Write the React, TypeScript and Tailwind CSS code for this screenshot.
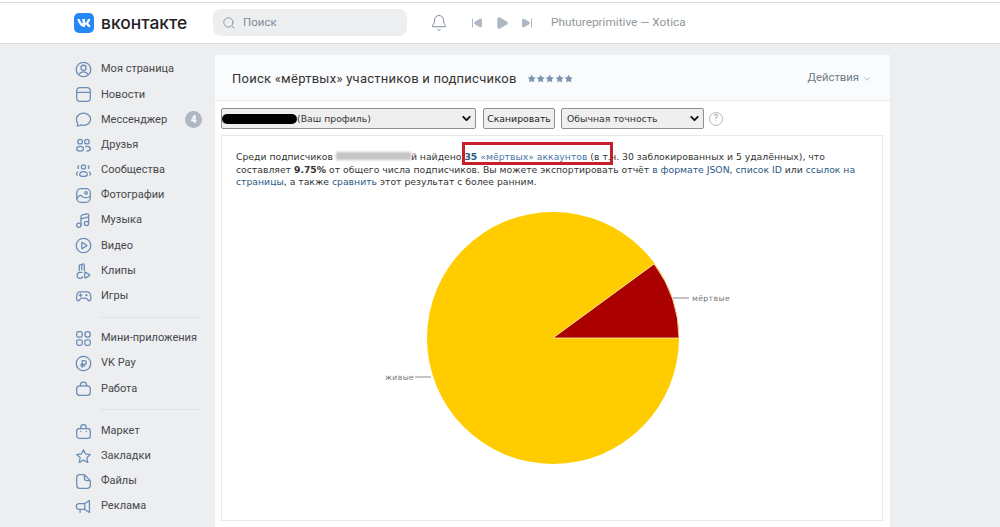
import React from 'react';
import { ChevronDown, Search, Bell, SkipBack, SkipForward, Play, Star } from 'lucide-react';
import { FaVk } from 'react-icons/fa';

const Ico = ({ children }: { children: React.ReactNode }) => (
  <svg viewBox="0 0 20 20" fill="none" stroke="#6a8db5" strokeWidth={1.5} strokeLinecap="round" strokeLinejoin="round" className="w-[17px] h-[17px] shrink-0">
    {children}
  </svg>
);

const icons: Record<string, React.ReactNode> = {
  user: <><circle cx="10" cy="10" r="8.5" /><circle cx="10" cy="8" r="3" /><path d="M5 15.5c1-2 3-2.8 5-2.8s4 .8 5 2.8" /></>,
  news: <><rect x="2" y="2" width="16" height="16" rx="4" /><path d="M2 7.5h16" /></>,
  chat: <path d="M10 2.5c4.7 0 8.3 3.2 8.3 7.2s-3.6 7.2-8.3 7.2c-1.1 0-2.2-.2-3.2-.5-1.2.9-2.8 1.3-4.3 1.1.6-.9 1-1.9.8-3-1-1.2-1.6-3-1.6-4.8 0-4 3.6-7.2 8.300-7.200z" />,
  friends: <><circle cx="6" cy="5.500" r="2.700" /><circle cx="14" cy="5.500" r="2.700" /><path d="M2 14c0-2 2-3 4-3s4 1 4 3-1.500 2.500-4 2.500S2 16 2 14zM12.500 11.200c.5-.1 1-.2 1.500-.2 2 0 4 1 4 3s-1.500 2.500-4 2.500" /></>,
  groups: <><circle cx="10" cy="6" r="2.500" /><path d="M5.500 15c0-2.500 2-3.800 4.500-3.800s4.500 1.300 4.500 3.800c0 1.500-2 2-4.500 2s-4.500-.5-4.500-2z" /><path d="M4.500 4.500c-1.200.4-1.500 2.300-.3 3M15.500 4.500c1.200.4 1.500 2.300.3 3M2.500 15.500c-1-.7-1-2.800.5-3.800M17.500 15.500c1-.7 1-2.800-.5-3.800" /></>,
  photo: <><rect x="2" y="2" width="16" height="16" rx="5" /><circle cx="13" cy="7" r="1.500" /><path d="M2.500 13.500c2-3.500 4-4.500 6-2.500s4 2.500 9 .5" /></>,
  music: <><circle cx="4.500" cy="15.500" r="2.500" /><circle cx="13.500" cy="13.500" r="2.500" /><path d="M7 15.500V6c0-1.500.8-2.300 2-2.600l5-1.200c1.200-.3 2 .3 2 1.500v9.800M7 8l9-2.200" /></>,
  video: <><circle cx="10" cy="10" r="8.500" /><path d="M8 6.800v6.400c0 .4.400.6.700.4l5-3.200c.3-.2.3-.6 0-.8l-5-3.200c-.3-.2-.7 0-.7.400z" /></>,
  clips: <><path d="M5 9V3.500a1.500 1.500 0 0 1 3 0V8M8 8V2.500a1.500 1.500 0 0 1 3 0V9" /><path d="M8.500 11H6a3.500 3.500 0 1 0 0 7c2 0 3-1 3-2" /><path d="M11.500 11.500v5.500c0 .5.500.8 1 .5l4.500-2.700c.4-.3.4-.8 0-1.100l-4.500-2.700c-.5-.3-1 0-1 .500z" /></>,
  games: <><path d="M5.500 4.500h9c2.200 0 3.500 2 4 5 .4 2.600.2 5.500-1.500 5.500-2 0-2.500-3-4.500-3H8c-2 0-2.500 3-4.500 3-1.700 0-1.900-2.900-1.500-5.500.5-3 1.800-5 3.500-5z" /><path d="M6.500 7v3M5 8.500h3" /><circle cx="13.500" cy="8.500" r=".6" /></>,
  apps: <><rect x="2" y="2" width="6.500" height="6.500" rx="2" /><circle cx="14.800" cy="5.200" r="3.200" /><rect x="2" y="11.500" width="6.500" height="6.500" rx="2" /><rect x="11.500" y="11.500" width="6.500" height="6.500" rx="2" /></>,
  pay: <><circle cx="10" cy="10" r="8.500" /><path d="M8.500 14.500v-8h2.500a2.300 2.300 0 0 1 0 4.600H7M7 12.800h4.500" /></>,
  job: <><rect x="2" y="7" width="16" height="11" rx="3.500" /><path d="M6.500 7V5.500C6.500 3.500 8 2.500 10 2.500s3.500 1 3.500 3V7" /></>,
  market: <><path d="M5 6.500h10c1.800 0 3 1.200 3 3V15c0 1.800-1.200 3-3 3H5c-1.800 0-3-1.200-3-3V9.500c0-1.800 1.200-3 3-3z" /><path d="M6.800 6.500V5.200c0-1.800 1.400-3.200 3.200-3.200s3.200 1.400 3.200 3.200v1.300M6.800 10v.1M13.200 10v.1" /></>,
  star: <path d="M10 2l2.400 5 5.600.7-4.100 3.800 1.100 5.500-5-2.800-5 2.800 1.100-5.500L2 7.700 7.600 7z" />,
  file: <path d="M5.500 2H11l7 7v5.500c0 2.200-1.300 3.500-3.500 3.500h-9C3.300 18 2 16.700 2 14.500v-9C2 3.300 3.300 2 5.500 2zM11 2v4c0 2 1 3 3 3h4" />,
  ads: <><path d="M17 3v14l-5.500-3.500H5a3.500 3.500 0 0 1 0-7h6.500z" /><path d="M11.500 6.500v7M6 13.500V17" /></>,
};

const SidebarItem = ({ icon, label, badge }: { icon: string; label: string; badge?: string }) => (
  <div className="flex items-center h-[25.2px]">
    <div className="w-[27px] flex items-center pl-[1px]">
      <Ico>{icons[icon]}</Ico>
    </div>
    <span className="text-[11px] text-[#45484c]">{label}</span>
    {badge && (
      <span className="ml-auto mr-[13px] w-[17px] h-[17px] rounded-full bg-[#aeb7c2] text-white text-[10px] font-bold flex items-center justify-center">
        {badge}
      </span>
    )}
  </div>
);

const Divider = () => <div className="h-px bg-[#dfe1e5] my-[8px] ml-[27px] mr-[15px]" />;

const Header = () => (
  <header className="h-[42px] shrink-0 bg-white border-t border-b border-[#d7d8db] mt-[2px] flex items-center pl-[74px]">
    <div className="w-[20px] h-[20px] rounded-[5px] bg-[#2787f5] flex items-center justify-center">
      <FaVk className="text-white text-[14px]" />
    </div>
    <span className="ml-[7px] w-[112px] text-[17.4px] leading-none font-medium text-[#222] font-['Inter']">вконтакте</span>
    <div className="w-[194px] h-[27px] -mt-[1px] rounded-lg bg-[#edeef0] flex items-center pl-[9px] gap-[7px] text-[#818c99]">
      <Search size={14} strokeWidth={1.5} />
      <span className="text-[11.5px]">Поиск</span>
    </div>
    <Bell size={18} strokeWidth={1.3} className="ml-[23px] text-[#7a8694]" />
    <div className="ml-[23px] flex items-center gap-[12px] text-[#aeb7c2]">
      <SkipBack size={12} fill="currentColor" />
      <Play size={14} fill="currentColor" />
      <SkipForward size={12} fill="currentColor" />
    </div>
    <span className="ml-[18px] text-[11.8px] text-[#939699]">Phutureprimitive — Xotica</span>
  </header>
);

const Sidebar = () => (
  <aside className="w-[141px] shrink-0 pt-[13px]">
    <SidebarItem icon="user" label="Моя страница" />
    <SidebarItem icon="news" label="Новости" />
    <SidebarItem icon="chat" label="Мессенджер" badge="4" />
    <SidebarItem icon="friends" label="Друзья" />
    <SidebarItem icon="groups" label="Сообщества" />
    <SidebarItem icon="photo" label="Фотографии" />
    <SidebarItem icon="music" label="Музыка" />
    <SidebarItem icon="video" label="Видео" />
    <SidebarItem icon="clips" label="Клипы" />
    <SidebarItem icon="games" label="Игры" />
    <Divider />
    <SidebarItem icon="apps" label="Мини-приложения" />
    <SidebarItem icon="pay" label="VK Pay" />
    <SidebarItem icon="job" label="Работа" />
    <Divider />
    <SidebarItem icon="market" label="Маркет" />
    <SidebarItem icon="star" label="Закладки" />
    <SidebarItem icon="file" label="Файлы" />
    <SidebarItem icon="ads" label="Реклама" />
  </aside>
);

const SelectBox = ({ className, children }: { className: string; children: React.ReactNode }) => (
  <div className={`h-[21px] flex items-center border border-[#8f8f8f] rounded-[2px] bg-[#efefef] font-['DejaVu_Sans'] text-[9.3px] text-[#333] ${className}`}>
    {children}
    <ChevronDown size={13} strokeWidth={3.5} className="ml-auto mr-[2px] text-[#111]" />
  </div>
);

const Link = ({ children }: { children: React.ReactNode }) => <span className="text-[#2a5885]">{children}</span>;

const Pie = () => (
  <svg width="660" height="330" className="block">
    <path d="M451 109 H467" stroke="#888" />
    <path d="M193 188 H209" stroke="#888" />
    <circle cx="331" cy="149" r="126" fill="#ffcc00" />
    <path d="M331 149 L457 149 A126 126 0 0 0 432.200 74.900 Z" fill="#aa0000" stroke="#fff3c0" strokeWidth="0.8" />
    <text x="470" y="112" fontSize="7.700" letterSpacing="0.400" fill="#777" fontFamily="DejaVu Sans">мёртвые</text>
    <text x="163" y="191" fontSize="7.700" letterSpacing="0.400" fill="#777" fontFamily="DejaVu Sans">живые</text>
  </svg>
);

const Panel = () => (
  <section className="w-[675px] h-[520px] mt-[11px] bg-white shrink-0">
    <div className="h-[46px] pt-[2px] bg-[#fafbfc] border-b border-[#e7e8ec] flex items-center pl-[17px] pr-[18px]">
      <span className="text-[13px] tracking-[0.25px] text-[#333]">Поиск «мёртвых» участников и подписчиков</span>
      <div className="ml-[10px] flex text-[#7b95b3]">
        {[0, 1, 2, 3, 4].map((i) => (
          <Star key={i} size={9.4} fill="currentColor" strokeWidth={0} />
        ))}
      </div>
      <span className="ml-auto text-[11.3px] text-[#6f7b88]">Действия</span>
      <ChevronDown size={10} className="ml-[3px] text-[#9aa5b1]" />
    </div>
    <div className="flex items-center pl-[6px] pt-[7px] pb-[6px]">
      <SelectBox className="w-[255px]">
        <span className="w-[75px] h-[10px] bg-black rounded-full" />
        <span>(Ваш профиль)</span>
      </SelectBox>
      <div className="ml-[7px] w-[72px] h-[21px] flex items-center justify-center border border-[#8f8f8f] rounded-[2px] bg-[#efefef] font-['DejaVu_Sans'] text-[9.3px] text-[#222]">
        Сканировать
      </div>
      <SelectBox className="ml-[6px] w-[143px] pl-[5px]">
        <span>Обычная точность</span>
      </SelectBox>
      <div className="ml-[5px] w-[14px] h-[14px] rounded-full border border-[#bbb] flex items-center justify-center text-[9px] text-[#999]">?</div>
    </div>
    <div className="ml-[6px] w-[662px] h-[386px] border border-[#e7e8ec]">
      <div className="relative pl-[14px] pt-[15px] font-['DejaVu_Sans'] text-[9.28px] leading-[12.6px] text-[#333] whitespace-nowrap">
        Среди подписчиков <span className="inline-block w-[75px] h-[8px] bg-[#c4c4c4] blur-[1px]" />й найдено{' '}
        <b className="text-[#2a5885]">35</b> <span className="text-[#4a76a8]">«мёртвых» аккаунтов</span> (в т.ч. 30 заблокированных и 5 удалённых), что
        <br />
        составляет <b>9.75%</b> от общего числа подписчиков. Вы можете экспортировать отчёт <Link>в формате JSON</Link>, <Link>список ID</Link> или <Link>ссылок на</Link>
        <br />
        <Link>страницы</Link>, а также <Link>сравнить</Link> этот результат с более ранним.
        <div className="absolute left-[240px] top-[6px] w-[151px] h-[23px] border-[3px] border-[#c8202a]" />
      </div>
      <Pie />
    </div>
  </section>
);

export default function App() {
  return (
    <div className="w-[1000px] h-[527px] overflow-hidden bg-[#edeef0] font-['Roboto',sans-serif] flex flex-col">
      <div className="bg-white">
        <Header />
      </div>
      <div className="flex pl-[74px]">
        <Sidebar />
        <Panel />
      </div>
    </div>
  );
}
